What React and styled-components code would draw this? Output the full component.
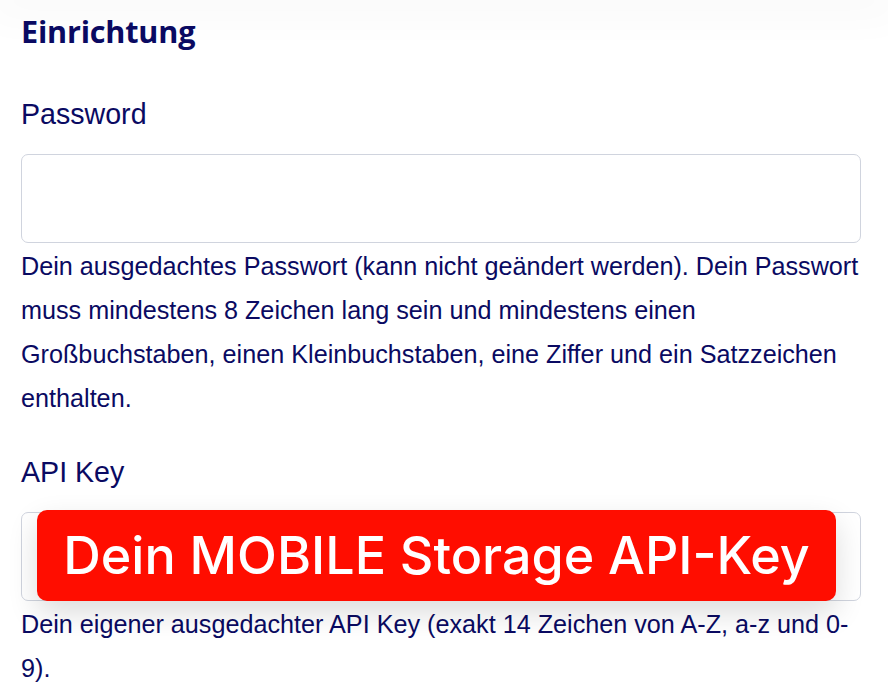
import React from 'react'
import styled, { createGlobalStyle } from 'styled-components'

const GlobalStyle = createGlobalStyle`
  html, body {
    margin: 0;
    background: #fff;
  }
  body {
    font-family: 'Liberation Sans', Arial, sans-serif;
    color: #0a0a62;
  }
`

const HeaderShade = styled.div`
  height: 0;
  box-shadow: 0 0 44px 14px rgba(0, 0, 0, 0.035);
`

const Form = styled.form`
  padding: 13px 27px 0 21px;
`

const Title = styled.h2`
  margin: 0 0 47px;
  font-family: 'Open Sans', sans-serif;
  font-weight: 700;
  font-size: 30.6px;
  line-height: 37px;
  letter-spacing: -0.2px;
  color: #0a0a62;
`

const Group = styled.div`
  margin-bottom: 35px;
`

const Label = styled.label`
  display: block;
  font-size: 28.6px;
  line-height: 34px;
  margin-bottom: 23px;
`

const InputWrap = styled.div`
  position: relative;
`

const Input = styled.input`
  display: block;
  box-sizing: border-box;
  width: 100%;
  height: 89px;
  margin: 0;
  border: 1px solid #d0d4de;
  border-radius: 7px;
  background: #fff;
  font: inherit;
  font-size: 25px;
  padding: 0 20px;
  outline: none;
`

const Help = styled.p`
  margin: 0;
  padding-top: 1px;
  font-size: 25.2px;
  line-height: 44px;
`

const Callout = styled.div`
  position: absolute;
  left: 16px;
  right: 25px;
  top: -2px;
  height: 91px;
  display: flex;
  align-items: center;
  justify-content: center;
  background: #ff0d00;
  border-radius: 10px;
  box-shadow: 0 12px 30px rgba(0, 0, 0, 0.14);
  color: #fff;
  font-family: Inter, sans-serif;
  font-weight: 500;
  font-size: 52px;
  white-space: nowrap;
`

export default function App() {
  return (
    <>
      <GlobalStyle />
      <HeaderShade />
      <Form onSubmit={(e) => e.preventDefault()}>
        <Title>Einrichtung</Title>
        <Group>
          <Label htmlFor='password'>Password</Label>
          <InputWrap>
            <Input id='password' type='password' />
          </InputWrap>
          <Help>
            Dein ausgedachtes Passwort (kann nicht geändert werden). Dein Passwort muss
            mindestens 8 Zeichen lang sein und mindestens einen Großbuchstaben, einen
            Kleinbuchstaben, eine Ziffer und ein Satzzeichen enthalten.
          </Help>
        </Group>
        <Group>
          <Label htmlFor='apikey'>API Key</Label>
          <InputWrap>
            <Input id='apikey' type='text' />
            <Callout>Dein MOBILE Storage API-Key</Callout>
          </InputWrap>
          <Help>
            Dein eigener ausgedachter API Key (exakt 14 Zeichen von A-Z, a-z und 0-9).
          </Help>
        </Group>
      </Form>
    </>
  )
}
